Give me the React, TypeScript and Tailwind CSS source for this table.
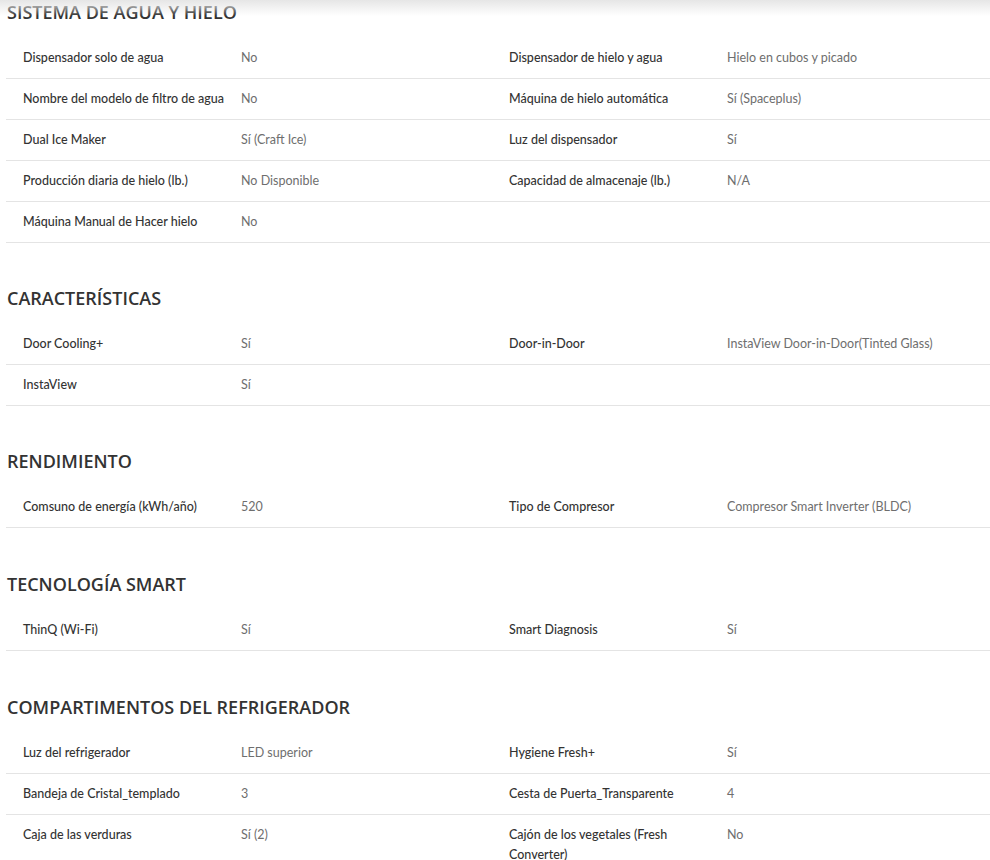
import React from "react";

type Spec = [string, string];

const SECTIONS: { title: string; gap: string; specs: Spec[] }[] = [
  {
    title: "SISTEMA DE AGUA Y HIELO",
    gap: "",
    specs: [
      ["Dispensador solo de agua", "No"],
      ["Dispensador de hielo y agua", "Hielo en cubos y picado"],
      ["Nombre del modelo de filtro de agua", "No"],
      ["Máquina de hielo automática", "Sí (Spaceplus)"],
      ["Dual Ice Maker", "Sí (Craft Ice)"],
      ["Luz del dispensador", "Sí"],
      ["Producción diaria de hielo (lb.)", "No Disponible"],
      ["Capacidad de almacenaje (lb.)", "N/A"],
      ["Máquina Manual de Hacer hielo", "No"],
    ],
  },
  {
    title: "CARACTERÍSTICAS",
    gap: "mt-[43px]",
    specs: [
      ["Door Cooling+", "Sí"],
      ["Door-in-Door", "InstaView Door-in-Door(Tinted Glass)"],
      ["InstaView", "Sí"],
    ],
  },
  {
    title: "RENDIMIENTO",
    gap: "mt-[43px]",
    specs: [
      ["Comsuno de energía (kWh/año)", "520"],
      ["Tipo de Compresor", "Compresor Smart Inverter (BLDC)"],
    ],
  },
  {
    title: "TECNOLOGÍA SMART",
    gap: "mt-[44px]",
    specs: [
      ["ThinQ (Wi-Fi)", "Sí"],
      ["Smart Diagnosis", "Sí"],
    ],
  },
  {
    title: "COMPARTIMENTOS DEL REFRIGERADOR",
    gap: "mt-[44px]",
    specs: [
      ["Luz del refrigerador", "LED superior"],
      ["Hygiene Fresh+", "Sí"],
      ["Bandeja de Cristal_templado", "3"],
      ["Cesta de Puerta_Transparente", "4"],
      ["Caja de las verduras", "Sí (2)"],
      ["Cajón de los vegetales (Fresh Converter)", "No"],
    ],
  },
];

function SpecCell({ spec }: { spec?: Spec }) {
  if (!spec) return <div />;
  return (
    <div className="flex">
      <div className="w-[235px] shrink-0 pl-[17px] pr-[8px] font-medium text-[#333]">
        {spec[0]}
      </div>
      <div className="pr-4 text-[#6e6e6e]">{spec[1]}</div>
    </div>
  );
}

function pairs(specs: Spec[]) {
  const rows: Spec[][] = [];
  for (let i = 0; i < specs.length; i += 2) rows.push(specs.slice(i, i + 2));
  return rows;
}

export default function App() {
  return (
    <div className="relative min-h-[860px] bg-white">
      <div className="pointer-events-none absolute inset-x-0 top-0 h-4 bg-gradient-to-b from-[#e6e6e6] to-white/0" />
      <div className="ml-[6px]">
        {SECTIONS.map((section) => (
          <section key={section.title} className={section.gap}>
            <h2 className="mb-[14px] pl-px font-['Open_Sans',sans-serif] text-[18px] font-semibold leading-6 text-[#333]">
              {section.title}
            </h2>
            {pairs(section.specs).map((row) => (
              <div
                key={row[0][0]}
                className="grid grid-cols-[486px_1fr] border-b border-[#e4e4e4] py-[10px] font-['Lato','Noto_Sans',sans-serif] text-[12.5px] leading-5"
              >
                <SpecCell spec={row[0]} />
                <SpecCell spec={row[1]} />
              </div>
            ))}
          </section>
        ))}
      </div>
    </div>
  );
}
